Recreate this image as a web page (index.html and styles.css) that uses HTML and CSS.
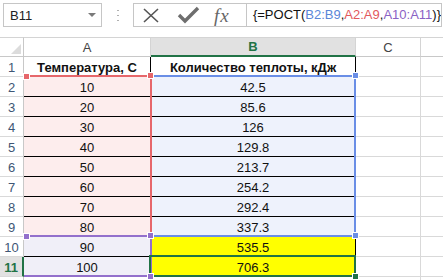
FILE: index.html
```html
<!DOCTYPE html>
<html>
<head>
<meta charset="utf-8">
<link rel="stylesheet" href="styles.css">
</head>
<body>
<div class="toolbar">
  <div class="namebox">
    <span class="ref">B11</span>
    <svg class="dd" width="8" height="4" viewBox="0 0 8 4"><path d="M0 0 H8 L4 4 Z" fill="#7a7a7a"/></svg>
  </div>
  <div class="grip">
    <svg width="2" height="12" viewBox="0 0 2 12"><rect x="0" y="1" width="2" height="1" fill="#b0b0b0"/><rect x="0" y="6" width="2" height="1" fill="#b0b0b0"/><rect x="0" y="11" width="2" height="1" fill="#b0b0b0"/></svg>
  </div>
  <div class="fbar">
    <div class="fbtns">
      <svg width="112" height="22" viewBox="0 0 112 22">
        <path d="M10 5 L24 18 M24 5 L10 18" stroke="#555" stroke-width="1.6" fill="none"/>
        <path d="M45 11 L51 17 L64 4" stroke="#6e6e6e" stroke-width="3.4" fill="none"/>
        <text x="80" y="18" class="fx">fx</text>
      </svg>
    </div>
    <div class="finput">{=POCT(<span class="fb">B2:B9</span>,<span class="fr">A2:A9</span>,<span class="fp">A10:A11</span>)}</div>
  </div>
</div>

<div class="sheet">
  <div class="c corner"><svg width="10" height="10" viewBox="0 0 10 10"><path d="M10 0 V10 H0 Z" fill="#dcdcdc"/></svg></div>
  <div class="c ch">A</div>
  <div class="c ch sel">B</div>
  <div class="c ch">C</div>
  <div class="c ch last"></div>

  <div class="c rh">1</div><div class="c a b1 bold">Температура, С</div><div class="c b bold">Количество теплоты, кДж</div><div class="c e"></div><div class="c e last"></div>
  <div class="c rh">2</div><div class="c a pink">10</div><div class="c b blue">42.5</div><div class="c e"></div><div class="c e last"></div>
  <div class="c rh">3</div><div class="c a pink">20</div><div class="c b blue">85.6</div><div class="c e"></div><div class="c e last"></div>
  <div class="c rh">4</div><div class="c a pink">30</div><div class="c b blue">126</div><div class="c e"></div><div class="c e last"></div>
  <div class="c rh">5</div><div class="c a pink">40</div><div class="c b blue">129.8</div><div class="c e"></div><div class="c e last"></div>
  <div class="c rh">6</div><div class="c a pink">50</div><div class="c b blue">213.7</div><div class="c e"></div><div class="c e last"></div>
  <div class="c rh">7</div><div class="c a pink">60</div><div class="c b blue">254.2</div><div class="c e"></div><div class="c e last"></div>
  <div class="c rh">8</div><div class="c a pink">70</div><div class="c b blue">292.4</div><div class="c e"></div><div class="c e last"></div>
  <div class="c rh">9</div><div class="c a pink">80</div><div class="c b blue">337.3</div><div class="c e"></div><div class="c e last"></div>
  <div class="c rh">10</div><div class="c a lav">90</div><div class="c b yel">535.5</div><div class="c e"></div><div class="c e last"></div>
  <div class="c rh rsel">11</div><div class="c a lav">100</div><div class="c b yel">706.3</div><div class="c e"></div><div class="c e last"></div>
  <div class="c rh"></div><div class="c e"></div><div class="c e"></div><div class="c e"></div><div class="c e last"></div>

  <div class="rng red"></div>
  <div class="rng blu"></div>
  <div class="rng pur"></div>
  <div class="rng grn"></div>

  <div class="hd hred h1"></div>
  <div class="hd hred h2"></div>
  <div class="hd hblu h3"></div>
  <div class="hd hblu h4"></div>
  <div class="hd hpur h5"></div>
  <div class="hd hpur h6"></div>
  <div class="hd hpur h7"></div>
  <div class="hd hgrn h8"></div>
</div>
</body>
</html>
```

FILE: styles.css
```css
html, body {
  margin: 0;
  padding: 0;
  background: #fff;
}
body {
  width: 443px;
  height: 280px;
  overflow: hidden;
  font-family: "Liberation Sans", Arial, sans-serif;
  font-size: 13px;
  color: #111;
}

/* ---------- formula bar ---------- */
.toolbar {
  display: flex;
  align-items: flex-start;
  height: 37px;
  padding: 3px 1px 0 3px;
  box-sizing: border-box;
}
.namebox {
  width: 101px;
  height: 24px;
  box-sizing: border-box;
  border: 1px solid #c6c6c6;
  display: flex;
  align-items: center;
  justify-content: space-between;
  padding: 0 5px 0 6px;
}
.ref {
  color: #222;
  font-size: 13px;
}
.dd {
  display: block;
}
.grip {
  width: 31px;
  height: 24px;
  display: flex;
  align-items: center;
  justify-content: center;
}
.grip svg {
  display: block;
}
.fbar {
  flex: 1;
  height: 24px;
  box-sizing: border-box;
  border: 1px solid #c6c6c6;
  display: flex;
}
.fbtns {
  width: 113px;
  box-sizing: border-box;
  border-right: 1px solid #c6c6c6;
}
.fbtns svg {
  display: block;
}
.fx {
  font-family: "Liberation Serif", "DejaVu Serif", serif;
  font-style: italic;
  font-size: 19px;
  fill: #666;
  letter-spacing: 1px;
}
.finput {
  flex: 1;
  padding-left: 6px;
  line-height: 22px;
  font-size: 13px;
  color: #111;
  white-space: nowrap;
  overflow: hidden;
}
.fb { color: #5a86d8; }
.fr { color: #e2585c; }
.fp { color: #8a62c4; }

/* ---------- sheet ---------- */
.sheet {
  position: relative;
  display: grid;
  grid-template-columns: 24px 127px 205px 65px 22px;
  grid-auto-rows: 20px;
}
.c {
  box-sizing: border-box;
  border-right: 1px solid #d9d9d9;
  border-bottom: 1px solid #d9d9d9;
  display: flex;
  align-items: center;
  justify-content: center;
  padding-top: 1px;
  white-space: nowrap;
  overflow: hidden;
}
.last {
  border-right: none;
}
.corner {
  border-top: 1px solid #d4d4d4;
  border-right-color: #c8c8c8;
  border-bottom-color: #c8c8c8;
  align-items: flex-end;
  justify-content: flex-end;
  padding: 0 2px 2px 0;
}
.corner svg {
  display: block;
}
.ch {
  border-top: 1px solid #d4d4d4;
  border-bottom-color: #c8c8c8;
  border-right-color: #d4d4d4;
  color: #444;
  padding-top: 0;
}
.ch.sel {
  background: #e1e1e1;
  color: #217346;
  font-weight: bold;
  border-bottom: 2px solid #217346;
}
.rh {
  color: #3e5675;
  border-right-color: #c8c8c8;
  border-bottom-color: #d9d9d9;
  font-size: 13px;
}
.rh.rsel {
  background: #e1e1e1;
  color: #217346;
  font-weight: bold;
  border-right: 2px solid #217346;
}
.a, .b {
  border-right-color: #000;
  border-bottom-color: #000;
  color: #111;
}
.bold {
  font-weight: bold;
}
.pink { background: #fdeded; }
.blue { background: #eef2fc; }
.lav { background: #f0eff8; }
.yel { background: #ffff00; }

/* ---------- range highlights (overlay) ---------- */
.rng {
  position: absolute;
  box-sizing: border-box;
  pointer-events: none;
}
.red {
  left: 24px;
  top: 38px;
  width: 128px;
  height: 162px;
  border-top: 2px solid #e6676b;
  border-right: 2px solid #e6676b;
}
.blu {
  left: 150px;
  top: 38px;
  width: 206px;
  height: 162px;
  border-top: 2px solid #6a8ee6;
  border-right: 2px solid #6a8ee6;
  border-bottom: 2px solid #6a8ee6;
}
.pur {
  left: 24px;
  top: 198px;
  width: 128px;
  height: 42px;
  border-top: 2px solid #9370cc;
  border-right: 2px solid #9370cc;
  border-bottom: 2px solid #9370cc;
}
.grn {
  left: 149px;
  top: 218px;
  width: 207px;
  height: 22px;
  border: 2px solid #217346;
}
.hd {
  position: absolute;
  width: 5px;
  height: 5px;
  box-shadow: 0 0 0 1px #fff;
}
.hred { background: #e6676b; }
.hblu { background: #6a8ee6; }
.hpur { background: #9370cc; }
.hgrn { background: #217346; }
.h1 { left: 24px; top: 37px; }
.h2 { left: 148px; top: 36px; }
.h3 { left: 353px; top: 36px; }
.h4 { left: 353px; top: 196px; }
.h5 { left: 148px; top: 196px; }
.h6 { left: 148px; top: 237px; }
.h7 { left: 24px; top: 197px; }
.h8 { left: 353px; top: 237px; }
```
